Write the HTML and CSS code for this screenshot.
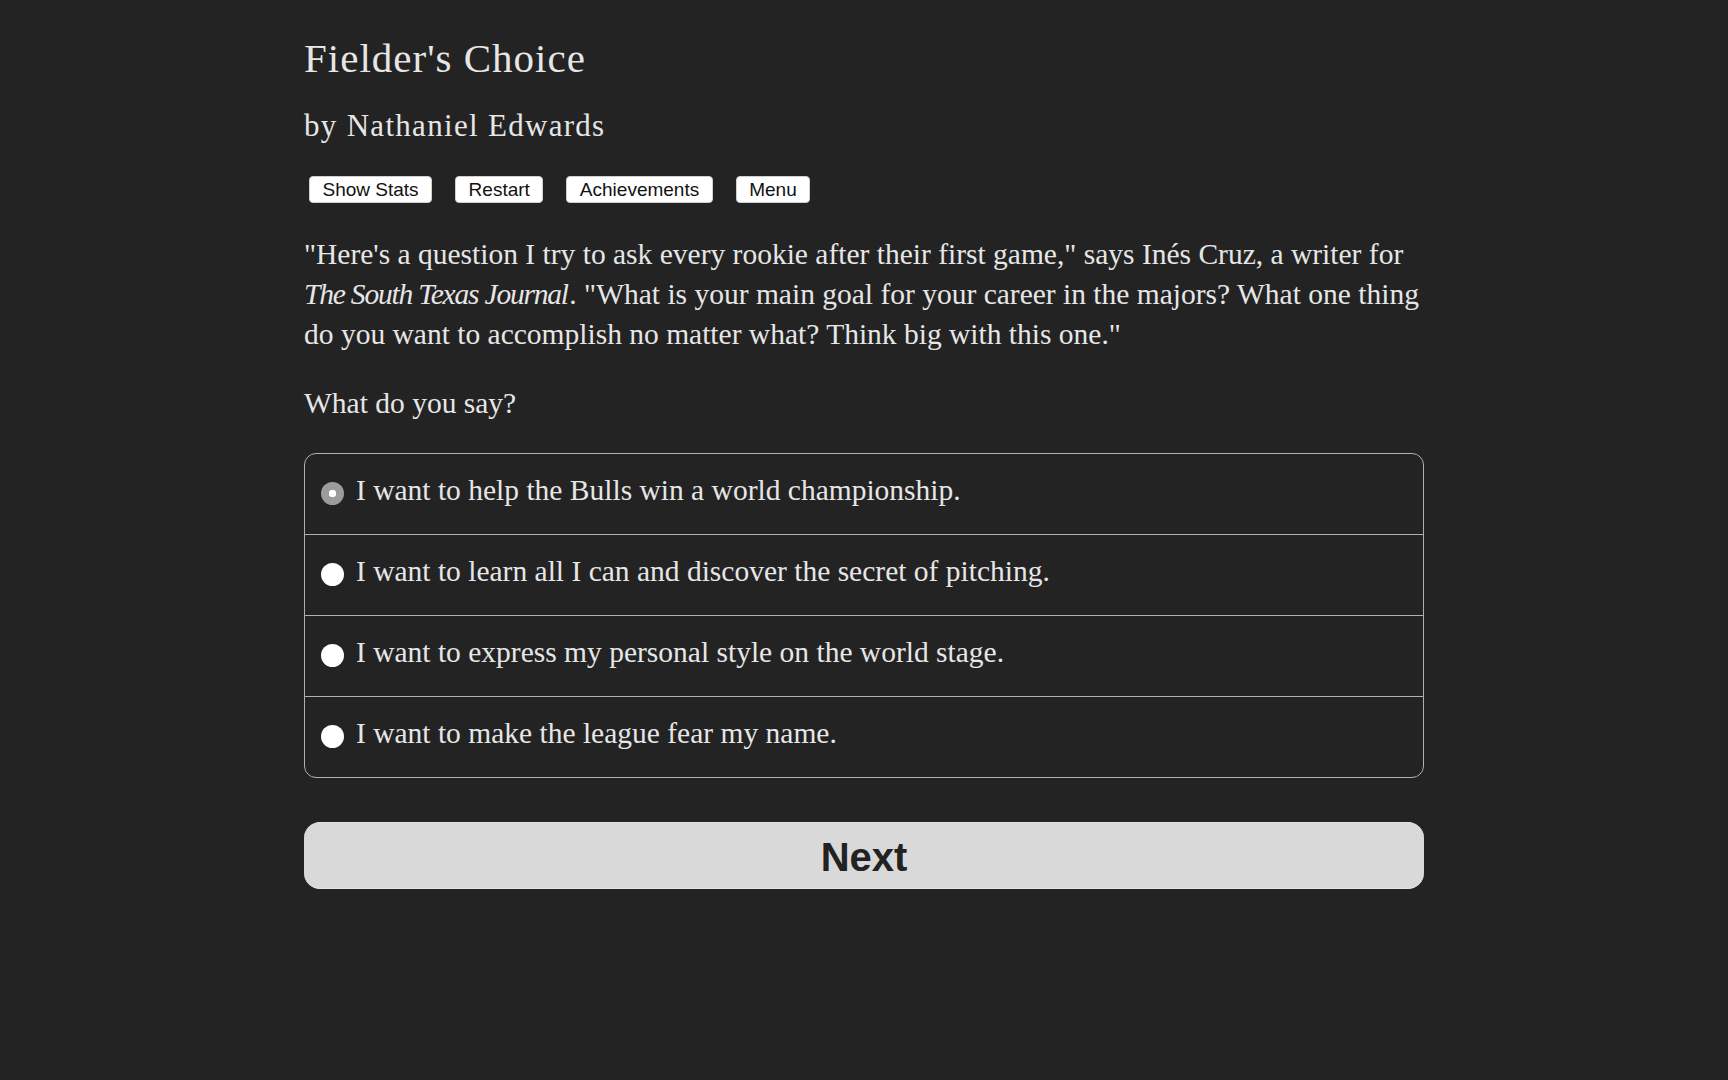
FILE: index.html
```html
<!DOCTYPE html>
<html lang="en">
<head>
<meta charset="utf-8">
<title>Fielder's Choice</title>
<link rel="stylesheet" href="styles.css">
</head>
<body>
<main class="page">
  <h1 class="title">Fielder's Choice</h1>
  <h2 class="byline">by Nathaniel Edwards</h2>
  <div class="toolbar">
    <button class="tool-btn" type="button">Show Stats</button>
    <button class="tool-btn" type="button">Restart</button>
    <button class="tool-btn" type="button">Achievements</button>
    <button class="tool-btn" type="button">Menu</button>
  </div>
  <p class="story">"Here's a question I try to ask every rookie after their first game," says Inés Cruz, a writer for <i class="pub">The South Texas Journal</i>. "What is your main goal for your career in the majors? What one thing do you want to accomplish no matter what? Think big with this one."</p>
  <p class="story prompt">What do you say?</p>
  <form class="choices">
    <label class="choice"><input class="radio" type="radio" name="goal" checked><span class="choice-text">I want to help the Bulls win a world championship.</span></label>
    <label class="choice"><input class="radio" type="radio" name="goal"><span class="choice-text">I want to learn all I can and discover the secret of pitching.</span></label>
    <label class="choice"><input class="radio" type="radio" name="goal"><span class="choice-text">I want to express my personal style on the world stage.</span></label>
    <label class="choice"><input class="radio" type="radio" name="goal"><span class="choice-text">I want to make the league fear my name.</span></label>
  </form>
  <button class="next" type="button">Next</button>
</main>
</body>
</html>
```
FILE: styles.css
```css
html, body {
  margin: 0;
  padding: 0;
  background: #232323;
}

body {
  color: #e6e6e6;
  font-family: "Liberation Serif", "Times New Roman", serif;
}

.page {
  width: 1120px;
  margin: 0 auto;
  padding-top: 34px;
}

.title {
  margin: 0;
  font-size: 41px;
  line-height: 49px;
  font-weight: normal;
  letter-spacing: 1px;
}

.byline {
  margin: 23px 0 0;
  font-size: 31px;
  line-height: 40px;
  font-weight: normal;
  letter-spacing: 1.3px;
}

.toolbar {
  display: flex;
  gap: 23px;
  margin-top: 30px;
  padding-left: 5px;
}

.tool-btn {
  height: 27px;
  padding: 0 12.5px;
  box-sizing: border-box;
  background: #ffffff;
  color: #111111;
  border: 1px solid #d0d0d0;
  border-radius: 4px;
  font-family: "Liberation Sans", Arial, sans-serif;
  font-size: 19px;
  line-height: 25px;
}

.story {
  margin: 31px 0 0;
  font-size: 29.5px;
  line-height: 40px;
}

.pub {
  letter-spacing: -1.2px;
  margin-right: 1.5px;
}

.prompt {
  margin-top: 29px;
}

.choices {
  margin: 29.5px 0 0;
  border: 1px solid #b0b0b0;
  border-radius: 12px;
  font-size: 29.5px;
  line-height: 40.5px;
}

.choice {
  display: flex;
  align-items: flex-start;
  gap: 12px;
  height: 81px;
  padding: 16px 15px 0 16px;
  box-sizing: border-box;
  border-bottom: 1px solid #b0b0b0;
}

.choice:last-child {
  height: 80px;
  border-bottom: none;
}

.radio {
  appearance: none;
  -webkit-appearance: none;
  margin: 12.5px 0 0;
  width: 23px;
  height: 23px;
  flex: 0 0 23px;
  border-radius: 50%;
  background: #ffffff;
  box-sizing: border-box;
}

.radio:checked {
  background: radial-gradient(circle, #ffffff 0 3.5px, #9c9c9c 4px);
}

.next {
  display: block;
  width: 100%;
  margin-top: 44px;
  height: 67px;
  padding: 3px 0 0;
  box-sizing: border-box;
  border: none;
  border-top: 1px solid #e4e4e4;
  border-bottom: 1px solid #e4e4e4;
  border-radius: 16px;
  background: #d9d9d9;
  color: #222222;
  font-family: "Liberation Sans", Arial, sans-serif;
  font-weight: bold;
  font-size: 40px;
  line-height: 62px;
}
```
